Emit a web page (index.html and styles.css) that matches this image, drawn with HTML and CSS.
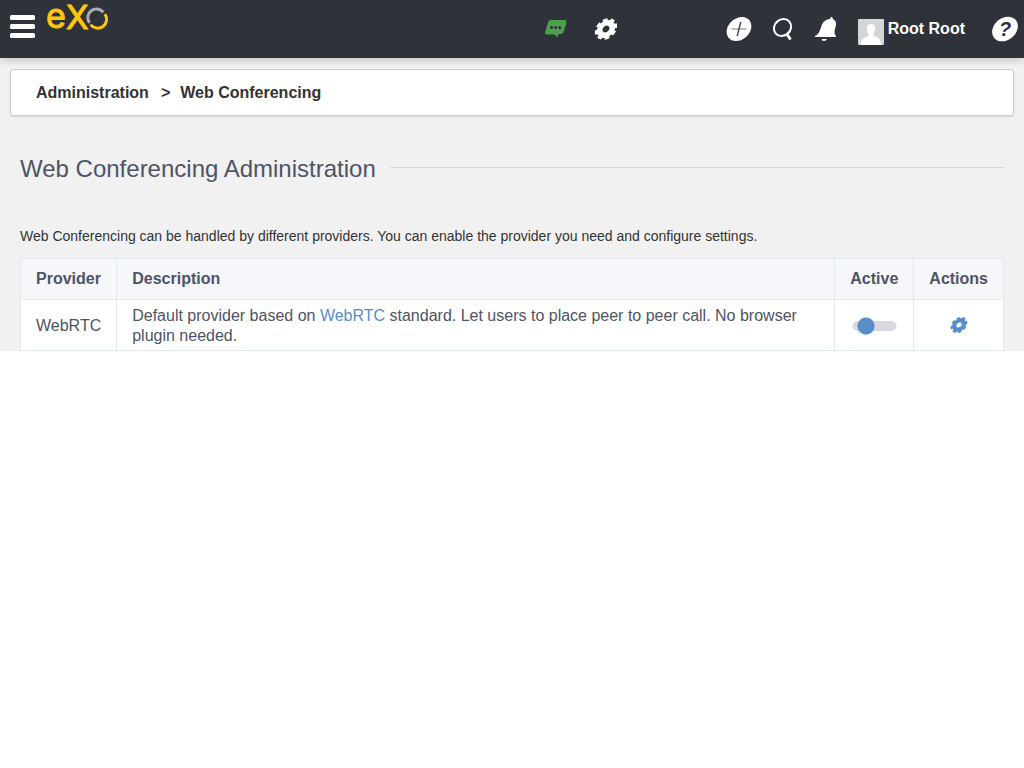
FILE: index.html
```html
<!DOCTYPE html>
<html lang="en">
<head>
<meta charset="utf-8">
<title>Web Conferencing Administration</title>
<link rel="stylesheet" href="styles.css">
</head>
<body>
<header class="topbar">
  <div class="topbar-left">
    <button class="icon-btn menu-btn" type="button" aria-label="Menu">
      <svg width="25" height="24" viewBox="0 0 25 24" fill="#fff"><rect width="25" height="5" rx="1.5"/><rect y="9" width="25" height="5" rx="1.5"/><rect y="18" width="25" height="5" rx="1.5"/></svg>
    </button>
    <a class="logo" href="#" aria-label="eXo">
      <svg width="64" height="32" viewBox="0 0 64 32">
        <text class="logo-e" x="0" y="28">e</text>
        <text class="logo-x" x="20" y="29">X</text>
        <g fill="none" stroke-width="3">
          <path d="M43.500 22.800A8.600 8.600 0 0 1 57.300 12.400" stroke="#abaeb3"/>
          <path d="M58.900 14.200A8.600 8.600 0 0 1 44.700 24.600" stroke="#ffc60b"/>
        </g>
      </svg>
    </a>
  </div>
  <div class="topbar-center">
    <button class="icon-btn" type="button" aria-label="Chat">
      <svg width="24" height="20" viewBox="0 0 24 20"><path d="M6.500 1H20Q23 1 22.300 4L20 12Q19.300 15 16 15L14 15.200V18.500L10.500 15.500H3Q.5 15.500 1.200 13L4 3.500Q4.700 1 6.500 1Z" fill="#4aa14a"/><g fill="#2e3239"><circle cx="7.500" cy="8.500" r="1.500"/><circle cx="11.600" cy="8.500" r="1.500"/><circle cx="15.700" cy="8.500" r="1.500"/></g></svg>
    </button>
    <button class="icon-btn" type="button" aria-label="Settings">
      <svg width="24" height="24" viewBox="0 0 24 24"><g transform="translate(12 12) skewX(-15) rotate(10)" fill="none" stroke="#fff"><circle r="6.200" stroke-width="5.600"/><circle r="9.200" stroke-width="3.200" stroke-dasharray="4.400 2.825"/></g></svg>
    </button>
  </div>
  <div class="topbar-right">
    <button class="icon-btn" type="button" aria-label="Add">
      <svg width="26" height="26" viewBox="0 0 26 26"><g transform="translate(13 13) skewX(-14)"><circle r="12" fill="#fff"/><path d="M-7.500 0H7.500" stroke="#a5a7aa" stroke-width="1.500"/><path d="M0-7V7" stroke="#444850" stroke-width="1.500"/></g></svg>
    </button>
    <button class="icon-btn" type="button" aria-label="Search">
      <svg width="22" height="24" viewBox="0 0 22 24" fill="none" stroke="#fff"><ellipse cx="10.500" cy="10.500" rx="9" ry="8" transform="rotate(-40 10.500 10.500)" stroke-width="2"/><path d="M14.500 16.500L18.500 22.500" stroke-width="3"/></svg>
    </button>
    <button class="icon-btn bell" type="button" aria-label="Notifications">
      <svg width="24" height="26" viewBox="0 0 24 26" fill="#fff"><path d="M16 3Q16 1 17.500 1T18.800 3Q22.500 4.500 22 9L20.500 15.500Q20 18 22 20L22 21H1V20Q4.500 18.500 6 14L8 8.500Q10 3.500 16 3ZM7.500 23H13Q12 25 10 25T7.500 23Z"/></svg>
    </button>
    <a class="user" href="#">
      <svg width="26" height="26" viewBox="0 0 26 26"><rect width="26" height="26" rx="1" fill="#d3d6d9"/><path d="M13 5C16 5 17.200 7 17.200 9.500C17.200 12 16 13.500 15.500 14.500V17C20 18.500 23 19.500 23 26H3C3 19.500 6 18.500 10.500 17V14.500C10 13.500 8.800 12 8.800 9.500C8.800 7 10 5 13 5Z" fill="#fff"/></svg>
      <span>Root Root</span>
    </a>
    <button class="icon-btn help" type="button" aria-label="Help">
      <svg width="28" height="26" viewBox="0 0 28 26"><ellipse rx="12.500" ry="12.300" transform="translate(14 13) skewX(-14)" fill="#fff"/><text class="help-mark" x="14" y="20" text-anchor="middle">?</text></svg>
    </button>
  </div>
</header>
<main class="page">
  <nav class="breadcrumb" aria-label="Breadcrumb">
    <a href="#">Administration</a><span class="sep">&gt;</span><a href="#">Web Conferencing</a>
  </nav>
  <section class="content">
    <h1 class="title">Web Conferencing Administration</h1>
    <p class="intro">Web Conferencing can be handled by different providers. You can enable the provider you need and configure settings.</p>
    <table class="providers">
      <thead>
        <tr><th>Provider</th><th class="wide">Description</th><th>Active</th><th>Actions</th></tr>
      </thead>
      <tbody>
        <tr>
          <td>WebRTC</td>
          <td>Default provider based on <a href="#">WebRTC</a> standard. Let users to place peer to peer call. No browser plugin needed.</td>
          <td class="center"><input class="switch" type="checkbox" aria-label="WebRTC active"></td>
          <td class="center">
            <button class="icon-btn action" type="button" aria-label="Configure WebRTC">
              <svg width="18" height="18" viewBox="0 0 24 24"><g transform="translate(12 12) skewX(-15) rotate(10)" fill="none" stroke="#578dc9"><circle r="6.200" stroke-width="5.600"/><circle r="9.200" stroke-width="3.200" stroke-dasharray="4.400 2.825"/></g></svg>
            </button>
          </td>
        </tr>
      </tbody>
    </table>
  </section>
</main>
</body>
</html>
```

FILE: styles.css
```css
* {
  box-sizing: border-box;
}

body {
  margin: 0;
  background: #fff;
  color: #333;
  font-family: "Liberation Sans", Arial, sans-serif;
  font-size: 16px;
  line-height: 20px;
}

a {
  color: inherit;
  text-decoration: none;
}

svg {
  display: block;
}

.icon-btn {
  padding: 0;
  border: 0;
  background: none;
  cursor: pointer;
}

.topbar {
  position: relative;
  display: grid;
  grid-template-columns: 1fr auto 1fr;
  align-items: center;
  height: 58px;
  padding: 0 5px 0 10px;
  background: #2e3239;
  box-shadow: 0 2px 8px rgba(0, 0, 0, 0.2);
}

.topbar-left {
  display: flex;
  align-items: flex-start;
  gap: 11px;
  height: 100%;
}

.menu-btn {
  margin-top: 15px;
}

.logo-e,
.logo-x {
  fill: #ffc60b;
  stroke: #ffc60b;
  stroke-width: 1px;
  font-family: Inter, sans-serif;
}

.logo-e {
  font-size: 34px;
}

.logo-x {
  font-size: 33px;
}

.topbar-center {
  display: flex;
  align-items: center;
  gap: 26px;
  margin-left: 132px;
}

.topbar-right {
  display: flex;
  align-items: center;
  justify-content: flex-end;
}

.topbar-right .icon-btn {
  margin-right: 20px;
}

.topbar-right .help {
  margin: 0 0 0 26px;
}

.user {
  display: flex;
  gap: 4px;
  color: #fff;
  font-weight: bold;
  white-space: nowrap;
  align-items: center;
}

.user svg {
  margin-top: 6px;
}

.help-mark {
  fill: #2e3239;
  font: italic bold 20px "Liberation Sans", Arial, sans-serif;
}

.page {
  padding: 11px 10px 0;
  background: #f1f1f1;
}

.breadcrumb {
  display: flex;
  align-items: center;
  height: 47px;
  padding: 0 25px;
  border: 1px solid #ccc;
  border-radius: 3px;
  background: #fff;
  box-shadow: 0 1px 2px rgba(0, 0, 0, 0.1);
  font-weight: bold;
}

.sep {
  margin: 0 10px 0 12px;
}

.content {
  padding: 38px 10px 0;
}

.title {
  display: flex;
  align-items: center;
  gap: 14px;
  margin: 0 0 42px;
  color: #4d5466;
  font-size: 24px;
  font-weight: normal;
  line-height: 30px;
}

.title::after {
  content: "";
  flex: 1;
  height: 1px;
  margin-bottom: 3px;
  background: #d8d8d8;
}

.intro {
  margin: 0 0 12px;
  font-size: 14px;
}

.providers {
  width: 100%;
  border-collapse: collapse;
  background: #fff;
  color: #4d5466;
}

.providers th,
.providers td {
  padding: 6px 15px 4px;
  border: 1px solid #e1e8ee;
  text-align: left;
}

.providers th {
  padding: 10px 15px;
  background: #f5f7fb;
}

.providers .wide {
  width: 100%;
}

.providers a {
  color: #578dc9;
}

.providers .center {
  padding: 5px 14px;
}

.switch {
  display: block;
  width: 45px;
  height: 18px;
  margin: 1px auto 0;
  appearance: none;
  background:
    radial-gradient(circle at 14px 9px, #578dc9 8px, transparent 9px),
    linear-gradient(#d8dadf, #d8dadf) 5px 4px / 35px 10px no-repeat,
    radial-gradient(circle at 5px 9px, #d8dadf 4px, transparent 5px),
    radial-gradient(circle at 40px 9px, #d8dadf 4px, transparent 5px);
  cursor: pointer;
}

.action {
  display: block;
  margin: 0 auto;
}
```
